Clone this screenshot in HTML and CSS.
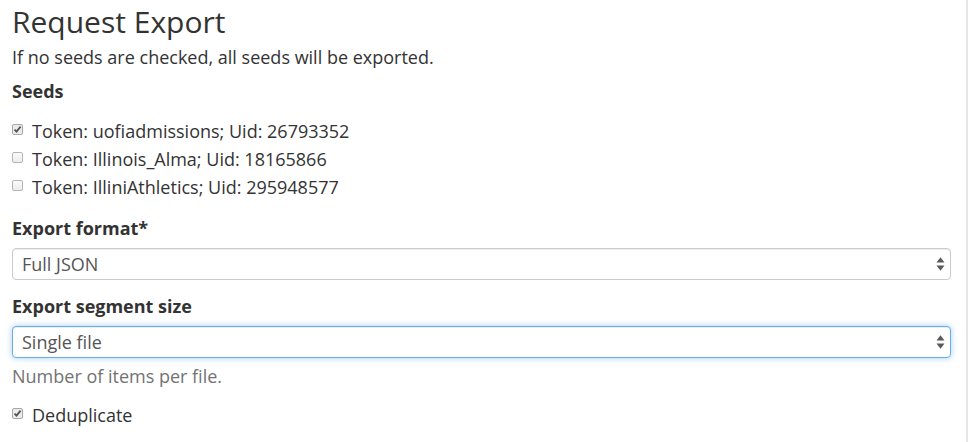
FILE: index.html
```html
<!DOCTYPE html>
<html lang="en">
<head>
<meta charset="utf-8">
<title>Request Export</title>
<link rel="stylesheet" href="styles.css">
</head>
<body>
<div class="page">
  <main class="content">
    <h1 class="title">Request Export</h1>
    <p class="lead">If no seeds are checked, all seeds will be exported.</p>
    <form class="export-form">
      <div class="group">
        <div class="label">Seeds</div>
        <div class="checks">
          <label class="check"><input type="checkbox" checked><span>Token: uofiadmissions; Uid: 26793352</span></label>
          <label class="check"><input type="checkbox"><span>Token: Illinois_Alma; Uid: 18165866</span></label>
          <label class="check"><input type="checkbox"><span>Token: IlliniAthletics; Uid: 295948577</span></label>
        </div>
      </div>
      <div class="group">
        <label class="label" for="fmt">Export format*</label>
        <div class="select-wrap">
          <select id="fmt" class="select">
            <option>Full JSON</option>
          </select>
          <svg class="arrows" width="9" height="14" viewBox="0 0 9 14"><path d="M4.5 0.3 L8.5 5.6 H0.5 Z" fill="#5a5a5a"/><path d="M4.5 13.7 L8.5 8.4 H0.5 Z" fill="#5a5a5a"/></svg>
        </div>
      </div>
      <div class="group second">
        <label class="label" for="seg">Export segment size</label>
        <div class="select-wrap">
          <select id="seg" class="select focused">
            <option>Single file</option>
          </select>
          <svg class="arrows" width="9" height="14" viewBox="0 0 9 14"><path d="M4.5 0.3 L8.5 5.6 H0.5 Z" fill="#5a5a5a"/><path d="M4.5 13.7 L8.5 8.4 H0.5 Z" fill="#5a5a5a"/></svg>
        </div>
        <p class="help">Number of items per file.</p>
      </div>
      <label class="check dedupe"><input type="checkbox" checked><span>Deduplicate</span></label>
    </form>
  </main>
  <div class="edge"></div>
</div>
</body>
</html>
```
FILE: styles.css
```css
* { box-sizing: border-box; }
html, body { margin: 0; padding: 0; background: #fff; }
body {
  font-family: "Open Sans", "Liberation Sans", sans-serif;
  font-size: 18px;
  line-height: 24px;
  color: #333;
  height: 442px;
  overflow: hidden;
}
.page { display: flex; height: 442px; }
.content { flex: 1; padding: 5px 15px 0 12px; }
.edge { width: 2px; background: #e6e6e6; }
.title {
  font-size: 30px;
  line-height: 33px;
  font-weight: 400;
  margin: 0;
}
.lead { margin: 7px 0 0; }
.export-form { margin: 0; }
.group { margin-top: 10px; }
.group + .group { margin-top: 15px; }
.group.second { margin-top: 14px; }
.label { display: block; font-weight: 700; margin-bottom: 8px; }
.checks { display: flex; flex-direction: column; padding-top: 6px; }
.check { display: flex; align-items: center; gap: 9px; height: 28px; font-weight: 400; }
.check input {
  -webkit-appearance: none;
  appearance: none;
  margin: 0 0 3px 0;
  width: 11px;
  height: 11px;
  border: 1px solid #b5b5b5;
  border-radius: 2px;
  background: linear-gradient(#fafafa, #ececec);
  flex: none;
}
.check input:checked {
  background: #ececec url("data:image/svg+xml;utf8,<svg xmlns='http://www.w3.org/2000/svg' width='9' height='9' viewBox='0 0 9 9'><path d='M1.5 4.6 L3.5 6.6 L7.6 1.6' fill='none' stroke='%23555' stroke-width='1.8'/></svg>") center / 9px 9px no-repeat;
  border-color: #a8a8a8;
}
.select-wrap { position: relative; }
.select {
  -webkit-appearance: none;
  appearance: none;
  display: block;
  width: 100%;
  height: 32px;
  padding: 0 9px;
  font: inherit;
  color: #555;
  background: #fff;
  border: 1px solid #ccc;
  border-radius: 4px;
  box-shadow: inset 0 1px 1px rgba(0,0,0,.075);
}
.select.focused {
  border-color: #66afe9;
  box-shadow: inset 0 1px 1px rgba(0,0,0,.075), 0 0 6px rgba(102,175,233,.6);
}
.arrows { position: absolute; right: 6px; top: 9px; pointer-events: none; }
.help { margin: 6px 0 0; color: #737373; }
.dedupe { margin-top: 13px; }
```
